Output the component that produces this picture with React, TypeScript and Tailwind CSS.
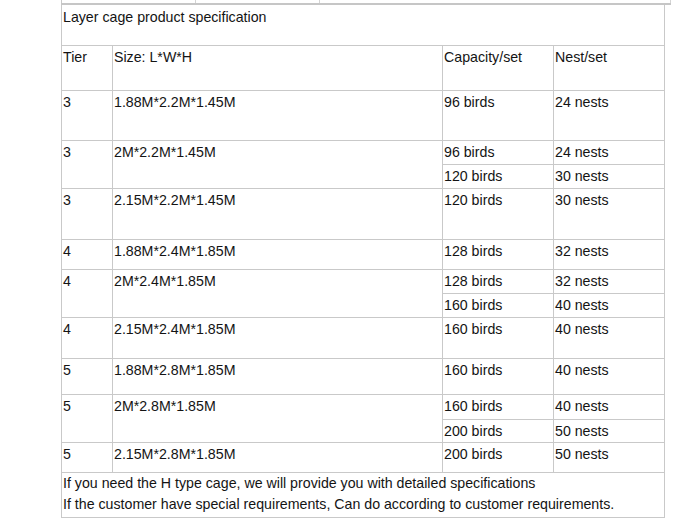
type SubRow = { capacity: string; nest: string; h: string }
type Row = { tier: string; size: string; subs: SubRow[] }

// heights exclude the row's own top border; second sub-rows include theirs
const rows: Row[] = [
  { tier: '3', size: '1.88M*2.2M*1.45M', subs: [{ capacity: '96 birds', nest: '24 nests', h: 'h-[49px]' }] },
  {
    tier: '3',
    size: '2M*2.2M*1.45M',
    subs: [
      { capacity: '96 birds', nest: '24 nests', h: 'h-[23px]' },
      { capacity: '120 birds', nest: '30 nests', h: 'h-[24px]' },
    ],
  },
  { tier: '3', size: '2.15M*2.2M*1.45M', subs: [{ capacity: '120 birds', nest: '30 nests', h: 'h-[50px]' }] },
  { tier: '4', size: '1.88M*2.4M*1.85M', subs: [{ capacity: '128 birds', nest: '32 nests', h: 'h-[29px]' }] },
  {
    tier: '4',
    size: '2M*2.4M*1.85M',
    subs: [
      { capacity: '128 birds', nest: '32 nests', h: 'h-[23px]' },
      { capacity: '160 birds', nest: '40 nests', h: 'h-[24px]' },
    ],
  },
  { tier: '4', size: '2.15M*2.4M*1.85M', subs: [{ capacity: '160 birds', nest: '40 nests', h: 'h-[40px]' }] },
  { tier: '5', size: '1.88M*2.8M*1.85M', subs: [{ capacity: '160 birds', nest: '40 nests', h: 'h-[35px]' }] },
  {
    tier: '5',
    size: '2M*2.8M*1.85M',
    subs: [
      { capacity: '160 birds', nest: '40 nests', h: 'h-[24px]' },
      { capacity: '200 birds', nest: '50 nests', h: 'h-[23px]' },
    ],
  },
  { tier: '5', size: '2.15M*2.8M*1.85M', subs: [{ capacity: '200 birds', nest: '50 nests', h: 'h-[29px]' }] },
]

const cell = 'pl-[1px] pt-[1px] border-l border-[#c9c9c9]'

export default function App() {
  return (
    <div className="w-[677px] h-[522px] bg-white text-[14.2px] leading-[21px] text-[#141414] font-['Liberation_Sans',Arial,sans-serif]">
      {/* strip left over from the table above */}
      <div className="ml-[61px] w-[610px] h-[5px] border-b-2 border-[#c6c6c6] flex">
        <div className="w-[134px] border-l border-[#c9c9c9]" />
        <div className="w-[124px] border-l border-[#d4d4d4]" />
        <div className="w-[352px] border-l border-r border-[#d4d4d4]" />
      </div>

      <div className="ml-[61px] w-[604px] border-r border-b border-[#c9c9c9]">
        {/* title */}
        <div className="h-[40px] pl-[1px] pt-[2px] border-l border-[#c9c9c9]">Layer cage product specification</div>

        {/* header */}
        <div className="flex h-[45px] border-t border-[#c9c9c9]">
          <div className={`${cell} w-[51px]`}>Tier</div>
          <div className={`${cell} w-[330px]`}>Size: L*W*H</div>
          <div className={`${cell} w-[111px]`}>Capacity/set</div>
          <div className={`${cell} w-[111px]`}>Nest/set</div>
        </div>

        {rows.map((row, i) => (
          <div key={i} className="flex border-t border-[#c9c9c9]">
            <div className={`${cell} w-[51px]`}>{row.tier}</div>
            <div className={`${cell} w-[330px]`}>{row.size}</div>
            <div className="flex flex-col">
              {row.subs.map((s, j) => (
                <div key={j} className={`flex ${s.h} ${j > 0 ? 'border-t border-[#c9c9c9]' : ''}`}>
                  <div className={`${cell} w-[111px]`}>{s.capacity}</div>
                  <div className={`${cell} w-[111px]`}>{s.nest}</div>
                </div>
              ))}
            </div>
          </div>
        ))}

        {/* notes */}
        <div className="h-[45px] pl-[1px] border-t border-l border-[#c9c9c9]">
          <p>If you need the H type cage, we will provide you with detailed specifications</p>
          <p>If the customer have special requirements, Can do according to customer requirements.</p>
        </div>
      </div>
    </div>
  )
}
